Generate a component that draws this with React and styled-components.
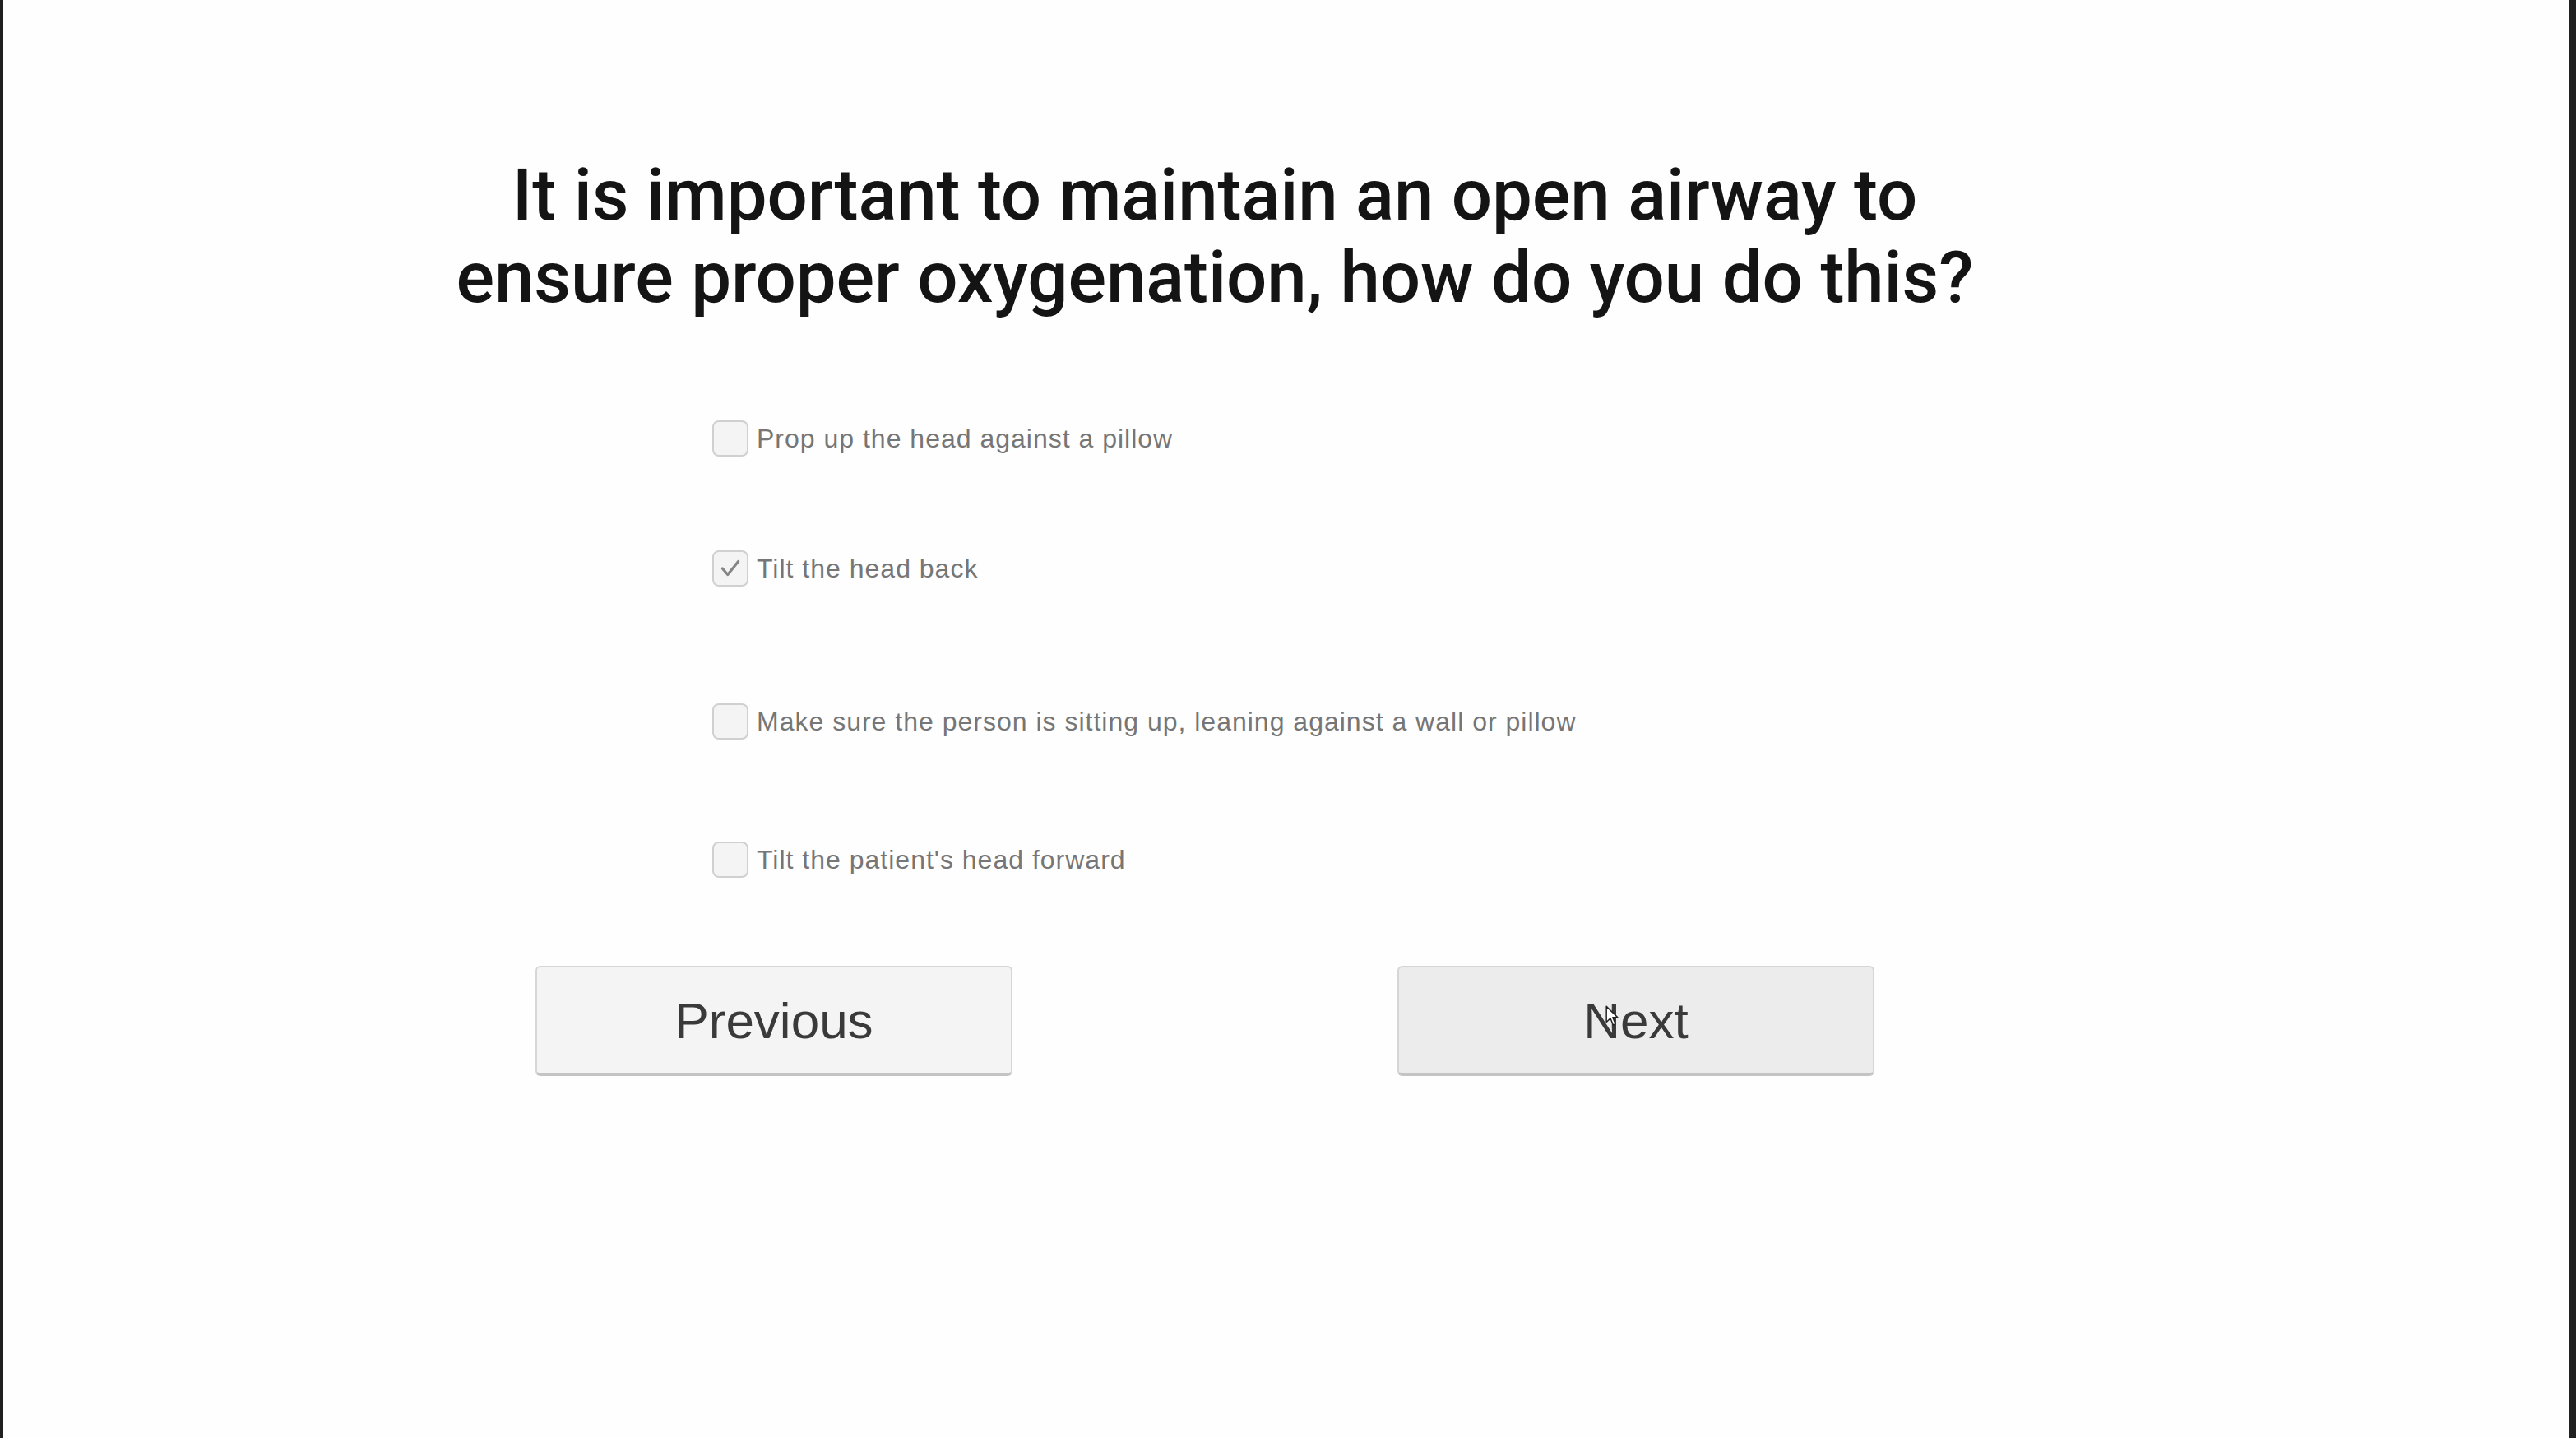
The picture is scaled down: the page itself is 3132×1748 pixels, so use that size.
import React from "react";
import styled, { createGlobalStyle } from "styled-components";

const Global = createGlobalStyle`
  html, body { margin: 0; padding: 0; background: #ffffff; }
  body { font-family: "Liberation Sans", Arial, sans-serif; }
`;

const Frame = styled.div`
  display: flex;
  width: 3132px;
  height: 1748px;
  background: #222222;
`;

const EdgeBar = styled.div`
  width: ${(p) => p.$w}px;
  flex: none;
  background: #202020;
`;

const Stage = styled.main`
  flex: 1;
  background: #fefefe;
  overflow: hidden;
`;

const Content = styled.div`
  width: 1860px;
  margin-left: 540px;
  padding-top: 187px;
  display: flex;
  flex-direction: column;
`;

const Title = styled.h1`
  margin: 0;
  padding-left: 6px;
  font-family: Roboto, "Noto Sans", sans-serif;
  font-weight: 500;
  font-size: 87px;
  line-height: 100px;
  color: #141414;
  text-align: center;
  letter-spacing: -0.1px;
`;

const OptionList = styled.div`
  display: flex;
  flex-direction: column;
  padding-left: 322px;
  margin-top: 123px;
`;

const Option = styled.label`
  display: flex;
  align-items: center;
  gap: 10px;
  height: 46px;
  margin-top: ${(p) => p.$gap}px;
`;

const Box = styled.span`
  width: 44px;
  height: 44px;
  flex: none;
  box-sizing: border-box;
  border: 2px solid #d0d0d0;
  border-radius: 8px;
  background: #f4f4f4;
  display: flex;
  align-items: center;
  justify-content: center;
`;

const OptionText = styled.span`
  font-family: "Liberation Sans", Arial, sans-serif;
  font-size: 32px;
  color: #767676;
  letter-spacing: 1px;
  white-space: nowrap;
`;

const ButtonRow = styled.div`
  display: flex;
  gap: 468px;
  padding-left: 107px;
  margin-top: 106px;
`;

const NavButton = styled.button`
  position: relative;
  width: 580px;
  height: 134px;
  box-sizing: border-box;
  border: 2px solid #d6d6d6;
  border-bottom: 4px solid #c4c4c4;
  border-radius: 6px;
  background: ${(p) => (p.$hover ? "#ececec" : "#f4f4f4")};
  font-family: "Liberation Sans", Arial, sans-serif;
  font-size: 62px;
  color: #3a3a3a;
  padding: 0;
  cursor: pointer;
`;

const Cursor = styled.svg`
  position: absolute;
  left: 250px;
  top: 46px;
  width: 18px;
  height: 26px;
`;

const Check = () => (
  <svg width="30" height="30" viewBox="0 0 28 28">
    <polyline
      points="5,14 11,21 23,6"
      fill="none"
      stroke="#858585"
      strokeWidth="3"
      strokeLinecap="round"
      strokeLinejoin="round"
    />
  </svg>
);

const options = [
  { text: "Prop up the head against a pillow", gap: 0, checked: false },
  { text: "Tilt the head back", gap: 112, checked: true },
  { text: "Make sure the person is sitting up, leaning against a wall or pillow", gap: 140, checked: false },
  { text: "Tilt the patient's head forward", gap: 122, checked: false },
];

export default function App() {
  return (
    <>
      <Global />
      <Frame>
        <EdgeBar $w={4} />
        <Stage>
          <Content>
            <Title>
              It is important to maintain an open airway to
              <br />
              ensure proper oxygenation, how do you do this?
            </Title>
            <OptionList>
              {options.map((o) => (
                <Option key={o.text} $gap={o.gap}>
                  <Box>{o.checked && <Check />}</Box>
                  <OptionText>{o.text}</OptionText>
                </Option>
              ))}
            </OptionList>
            <ButtonRow>
              <NavButton>Previous</NavButton>
              <NavButton $hover>
                Next
                <Cursor viewBox="0 0 12 19">
                  <path
                    d="M1 1 L1 15 L4.5 11.5 L7 17.5 L9 16.6 L6.6 10.8 L11 10.8 Z"
                    fill="#ffffff"
                    stroke="#222"
                    strokeWidth="1.1"
                    strokeLinejoin="round"
                  />
                </Cursor>
              </NavButton>
            </ButtonRow>
          </Content>
        </Stage>
        <EdgeBar $w={8} />
      </Frame>
    </>
  );
}
